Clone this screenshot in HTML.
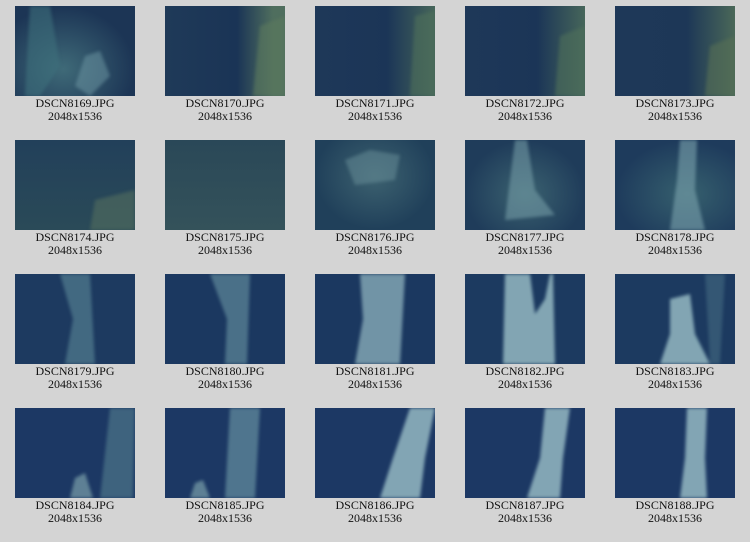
<!DOCTYPE html>
<html><head><style>
body{margin:0;width:750px;height:542px;background:#d4d4d4;position:relative;overflow:hidden;font-family:"Liberation Serif",serif;}
.c{position:absolute;width:150px;text-align:center;font-size:12px;line-height:13px;color:#111;}
.t{position:relative;width:120px;height:90px;margin:6px auto 1px;overflow:hidden;background:#1d3858;}
.t svg{position:absolute;left:0;top:0;filter:blur(1.5px)}
</style></head><body>
<!-- row 1 -->
<div class="c" style="left:0;top:0"><div class="t" style="background:radial-gradient(ellipse at 40% 70%,#3f6a78,#1c3555 70%)"><svg width="120" height="90"><path d="M15 0 L35 0 L45 60 L25 90 L10 90 Z" fill="#3d6f7c" opacity=".6"/><path d="M70 50 L85 45 L95 70 L75 90 L60 80Z" fill="#6f9aa5" opacity=".5"/></svg></div>DSCN8169.JPG<br>2048x1536</div>
<div class="c" style="left:150px;top:0"><div class="t" style="background:linear-gradient(90deg,#1f3a58 0%,#1a3456 60%,#4f6e5e 90%)"><svg width="120" height="90"><path d="M95 20 L120 10 L120 90 L88 90 Z" fill="#5c7a5e" opacity=".6"/></svg></div>DSCN8170.JPG<br>2048x1536</div>
<div class="c" style="left:300px;top:0"><div class="t" style="background:linear-gradient(90deg,#1e3858,#1b3557 60%,#46665a)"><svg width="120" height="90"><path d="M100 10 L120 5 L120 90 L95 90 Z" fill="#4f6f5a" opacity=".6"/></svg></div>DSCN8171.JPG<br>2048x1536</div>
<div class="c" style="left:450px;top:0"><div class="t" style="background:linear-gradient(90deg,#1e3858,#1b3557 60%,#46665a)"><svg width="120" height="90"><path d="M95 30 L120 20 L120 90 L90 90 Z" fill="#4f6f5a" opacity=".6"/></svg></div>DSCN8172.JPG<br>2048x1536</div>
<div class="c" style="left:600px;top:0"><div class="t" style="background:linear-gradient(90deg,#1e3858,#1d3757 60%,#4a6858)"><svg width="120" height="90"><path d="M95 40 L120 30 L120 90 L90 90 Z" fill="#566f55" opacity=".6"/></svg></div>DSCN8173.JPG<br>2048x1536</div>
<!-- row 2 -->
<div class="c" style="left:0;top:134px"><div class="t" style="background:linear-gradient(180deg,#22405a,#2a4a58)"><svg width="120" height="90"><path d="M80 60 L120 50 L120 90 L75 90Z" fill="#5b7660" opacity=".5"/></svg></div>DSCN8174.JPG<br>2048x1536</div>
<div class="c" style="left:150px;top:134px"><div class="t" style="background:linear-gradient(180deg,#2a4858,#34525a)"></div>DSCN8175.JPG<br>2048x1536</div>
<div class="c" style="left:300px;top:134px"><div class="t" style="background:radial-gradient(ellipse at 50% 40%,#3d6270,#20405a 70%)"><svg width="120" height="90"><path d="M30 20 L55 10 L85 15 L80 40 L40 45Z" fill="#6a909a" opacity=".5"/></svg></div>DSCN8176.JPG<br>2048x1536</div>
<div class="c" style="left:450px;top:134px"><div class="t" style="background:radial-gradient(ellipse at 50% 60%,#3b6270,#1f3c5a 70%)"><svg width="120" height="90"><path d="M50 0 L62 0 L70 50 L90 75 L40 80 L45 40Z" fill="#7aa3ab" opacity=".55"/></svg></div>DSCN8177.JPG<br>2048x1536</div>
<div class="c" style="left:600px;top:134px"><div class="t" style="background:radial-gradient(ellipse at 60% 60%,#36606e,#1e3b5c 70%)"><svg width="120" height="90"><path d="M65 0 L82 0 L80 50 L90 90 L55 90 L62 40Z" fill="#7ba4ae" opacity=".6"/></svg></div>DSCN8178.JPG<br>2048x1536</div>
<!-- row 3 -->
<div class="c" style="left:0;top:268px"><div class="t" style="background:#1d3a60"><svg width="120" height="90"><path d="M45 0 L75 0 L80 90 L50 90 L58 45Z" fill="#5c8998" opacity=".6"/></svg></div>DSCN8179.JPG<br>2048x1536</div>
<div class="c" style="left:150px;top:268px"><div class="t" style="background:#1b3860"><svg width="120" height="90"><path d="M45 0 L85 0 L82 90 L60 90 L62 45Z" fill="#6a96a4" opacity=".6"/></svg></div>DSCN8180.JPG<br>2048x1536</div>
<div class="c" style="left:300px;top:268px"><div class="t" style="background:#1b3860"><svg width="120" height="90"><path d="M45 0 L90 0 L85 90 L40 90 L48 45Z" fill="#8fb3bd" opacity=".75"/></svg></div>DSCN8181.JPG<br>2048x1536</div>
<div class="c" style="left:450px;top:268px"><div class="t" style="background:#1c3a60"><svg width="120" height="90"><path d="M40 0 L65 0 L70 40 L80 25 L85 0 L88 0 L90 90 L38 90Z" fill="#9cc0c8" opacity=".8"/></svg></div>DSCN8182.JPG<br>2048x1536</div>
<div class="c" style="left:600px;top:268px"><div class="t" style="background:#1c3a60"><svg width="120" height="90"><path d="M55 25 L75 20 L80 60 L95 90 L45 90 L55 60Z" fill="#9cc0c8" opacity=".8"/><path d="M90 0 L110 0 L105 90 L95 90Z" fill="#4b7488" opacity=".5"/></svg></div>DSCN8183.JPG<br>2048x1536</div>
<!-- row 4 -->
<div class="c" style="left:0;top:402px"><div class="t" style="background:#1c3864"><svg width="120" height="90"><path d="M95 0 L120 0 L118 90 L85 90Z" fill="#55818f" opacity=".6"/><path d="M60 70 L70 65 L78 90 L55 90Z" fill="#7aa0aa" opacity=".7"/></svg></div>DSCN8184.JPG<br>2048x1536</div>
<div class="c" style="left:150px;top:402px"><div class="t" style="background:#1c3864"><svg width="120" height="90"><path d="M65 0 L95 0 L90 90 L60 90Z" fill="#6b97a4" opacity=".65"/><path d="M30 75 L38 72 L45 90 L25 90Z" fill="#7aa0aa" opacity=".7"/></svg></div>DSCN8185.JPG<br>2048x1536</div>
<div class="c" style="left:300px;top:402px"><div class="t" style="background:#1c3864"><svg width="120" height="90"><path d="M95 0 L120 0 L110 50 L105 90 L65 90 L78 50Z" fill="#9cc0c8" opacity=".8"/></svg></div>DSCN8186.JPG<br>2048x1536</div>
<div class="c" style="left:450px;top:402px"><div class="t" style="background:#1c3864"><svg width="120" height="90"><path d="M80 0 L105 0 L98 50 L95 90 L62 90 L75 50Z" fill="#9cc0c8" opacity=".8"/></svg></div>DSCN8187.JPG<br>2048x1536</div>
<div class="c" style="left:600px;top:402px"><div class="t" style="background:#1c3864"><svg width="120" height="90"><path d="M72 0 L92 0 L90 50 L92 90 L65 90 L70 50Z" fill="#9cc0c8" opacity=".8"/></svg></div>DSCN8188.JPG<br>2048x1536</div>
</body></html>
